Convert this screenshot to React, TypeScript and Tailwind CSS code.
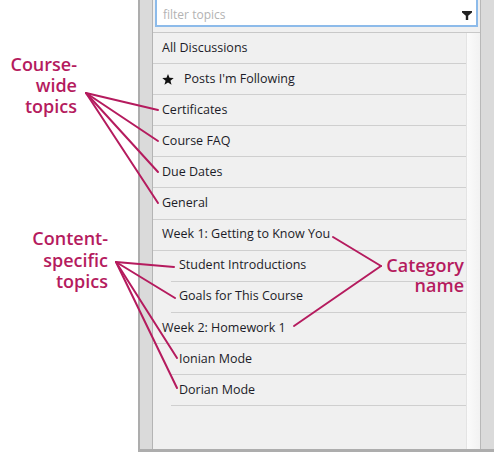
import React from "react";

const FONT = { fontFamily: '"Open Sans", "Noto Sans", Arial, sans-serif' };

type Row = { label: string; indent?: boolean; star?: boolean };

const rows: Row[] = [
  { label: "All Discussions" },
  { label: "Posts I'm Following", star: true },
  { label: "Certificates" },
  { label: "Course FAQ" },
  { label: "Due Dates" },
  { label: "General" },
  { label: "Week 1: Getting to Know You" },
  { label: "Student Introductions", indent: true },
  { label: "Goals for This Course", indent: true },
  { label: "Week 2: Homework 1" },
  { label: "Ionian Mode", indent: true },
  { label: "Dorian Mode", indent: true },
];

function Star() {
  return (
    <svg width="12" height="11" viewBox="0 0 24 23" className="shrink-0">
      <path
        d="M12 0 L15.2 7.9 L24 8.4 L17.1 13.9 L19.4 22.6 L12 17.7 L4.6 22.6 L6.9 13.9 L0 8.4 L8.8 7.9 Z"
        fill="#111"
      />
    </svg>
  );
}

function Funnel() {
  return (
    <svg width="10" height="9" viewBox="0 0 10 9">
      <path d="M0 0 H10 V1.6 L6.2 4.8 V9 H3.8 V4.8 L0 1.6 Z" fill="#222" />
    </svg>
  );
}

export default function App() {
  const c = "#b51b5e";
  return (
    <div className="relative w-[494px] h-[452px] bg-white overflow-hidden" style={FONT}>
      <div className="flex h-full">
        <div className="w-[138px] shrink-0" />
        <div className="flex-1 flex flex-col">
          <div className="flex flex-1 min-h-0">
            <div className="w-[2px] bg-[#adadad]" />
            <div className="w-[12px] bg-[#dadada]" />
            <div className="w-[328px] flex flex-col bg-[#f0f0f0] border-l border-[#b4b4b4]">
              <div className="h-[33px] shrink-0 border-b border-[#c8c8c8] px-[2px]">
                <div className="-mt-[4px] h-[31px] bg-white border-2 border-[#8dbbea] flex items-center pt-[7px] pl-[6px] pr-[4px]">
                  <span className="flex-1 text-[12px] text-[#b3b3b3]">filter topics</span>
                  <Funnel />
                </div>
              </div>
              <div className="flex flex-1 min-h-0">
                <div className="w-[313px] flex flex-col">
                  {rows.map((r) =>
                    r.indent ? (
                      <div key={r.label} className="pl-[18px] shrink-0">
                        <div className="h-[31.1px] border-b border-[#cfcfcf] flex items-center pl-[8px] text-[12.5px] text-[#1c1c28]">
                          {r.label}
                        </div>
                      </div>
                    ) : (
                      <div
                        key={r.label}
                        className="h-[31.1px] shrink-0 border-b border-[#cfcfcf] flex items-center pl-[9px] text-[12.5px] text-[#1c1c28]"
                      >
                        {r.star ? (
                          <span className="flex items-center gap-[10px]">
                            <Star />
                            {r.label}
                          </span>
                        ) : (
                          r.label
                        )}
                      </div>
                    )
                  )}
                </div>
                <div className="w-[14px] border-l border-[#e4e4e4] bg-gradient-to-r from-[#fbfbfb] to-[#f2f2f2]" />
              </div>
            </div>
            <div className="w-[1px] bg-[#b8b8b8]" />
            <div className="flex-1 bg-[#dadada]" />
          </div>
          <div className="h-[3px] bg-[#adadad]" />
        </div>
      </div>

      <svg className="absolute inset-0 pointer-events-none" width="494" height="452">
        <g stroke={c} strokeWidth="2" strokeLinecap="round" fill="none">
          <line x1="86" y1="93" x2="158" y2="110" />
          <line x1="86" y1="93" x2="158" y2="141" />
          <line x1="86" y1="93" x2="158" y2="172" />
          <line x1="86" y1="93" x2="158" y2="203" />
          <line x1="116" y1="262" x2="174" y2="267" />
          <line x1="116" y1="262" x2="175" y2="298" />
          <line x1="116" y1="262" x2="177" y2="358" />
          <line x1="116" y1="262" x2="177" y2="388" />
          <line x1="381" y1="266" x2="333" y2="237" />
          <line x1="381" y1="266" x2="294" y2="326" />
        </g>
      </svg>

      <div
        className="absolute left-0 top-[54px] w-[77px] text-right text-[18px] leading-[21px] font-semibold"
        style={{ color: c }}
      >
        Course-
        <br />
        wide
        <br />
        topics
      </div>
      <div
        className="absolute left-0 top-[228px] w-[108px] text-right text-[18px] leading-[21.5px] font-semibold"
        style={{ color: c }}
      >
        Content-
        <br />
        specific
        <br />
        topics
      </div>
      <div
        className="absolute right-[30px] top-[255px] text-right text-[18px] leading-[20px] font-semibold"
        style={{ color: c }}
      >
        Category
        <br />
        name
      </div>
    </div>
  );
}
